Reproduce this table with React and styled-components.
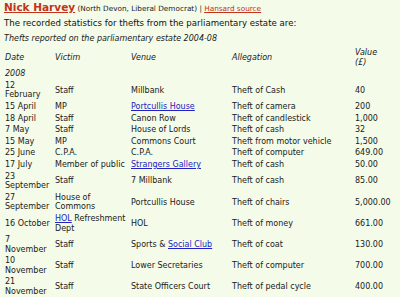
import styled, { createGlobalStyle } from "styled-components";

const getRows = () => [
  { date: "12 February", victim: "Staff", venue: "Millbank", allegation: "Theft of Cash", value: "40" },
  { date: "15 April", victim: "MP", venue: <Link>Portcullis House</Link>, allegation: "Theft of camera", value: "200" },
  { date: "18 April", victim: "Staff", venue: "Canon Row", allegation: "Theft of candlestick", value: "1,000" },
  { date: "7 May", victim: "Staff", venue: "House of Lords", allegation: "Theft of cash", value: "32" },
  { date: "15 May", victim: "MP", venue: "Commons Court", allegation: "Theft from motor vehicle", value: "1,500" },
  { date: "25 June", victim: "C.P.A.", venue: "C.P.A.", allegation: "Theft of computer", value: "649.00" },
  { date: "17 July", victim: "Member of public", venue: <Link>Strangers Gallery</Link>, allegation: "Theft of cash", value: "50.00" },
  { date: "23 September", victim: "Staff", venue: "7 Millbank", allegation: "Theft of cash", value: "85.00" },
  { date: "27 September", victim: "House of Commons", venue: "Portcullis House", allegation: "Theft of chairs", value: "5,000.00" },
  { date: "16 October", victim: <><Link>HOL</Link> Refreshment Dept</>, venue: "HOL", allegation: "Theft of money", value: "661.00" },
  { date: "7 November", victim: "Staff", venue: <>Sports &amp; <Link>Social Club</Link></>, allegation: "Theft of coat", value: "130.00" },
  { date: "10 November", victim: "Staff", venue: "Lower Secretaries", allegation: "Theft of computer", value: "700.00" },
  { date: "21 November", victim: "Staff", venue: "State Officers Court", allegation: "Theft of pedal cycle", value: "400.00" },
];

function App() {
  const rows = getRows();
  return (
    <>
      <GlobalStyle />
      <Page>
        <Byline>
          <MemberName>Nick Harvey</MemberName> (North Devon, Liberal Democrat) |{" "}
          <Source>Hansard source</Source>
        </Byline>
        <Intro>The recorded statistics for thefts from the parliamentary estate are:</Intro>
        <Table>
          <Caption>Thefts reported on the parliamentary estate 2004-08</Caption>
          <colgroup>
            <col style={{ width: 50 }} />
            <col style={{ width: 76 }} />
            <col style={{ width: 101 }} />
            <col style={{ width: 123 }} />
            <col />
          </colgroup>
          <thead>
            <tr>
              <Head>Date</Head>
              <Head>Victim</Head>
              <Head>Venue</Head>
              <Head>Allegation</Head>
              <Head>
                Value
                <br />
                (£)
              </Head>
            </tr>
          </thead>
          <tbody>
            <tr>
              <Year colSpan={5}>2008</Year>
            </tr>
            {rows.map((row) => (
              <tr key={row.date}>
                <Cell>{row.date}</Cell>
                <Cell>{row.victim}</Cell>
                <Cell>{row.venue}</Cell>
                <Cell>{row.allegation}</Cell>
                <Cell>{row.value}</Cell>
              </tr>
            ))}
          </tbody>
        </Table>
      </Page>
    </>
  );
}

export default App;

const GlobalStyle = createGlobalStyle`
  html, body {
    margin: 0;
    background: #f4fbe9;
  }
  body {
    font-family: "DejaVu Sans", Verdana, sans-serif;
    color: #1a1a1a;
  }
`;

const Page = styled.div`
  width: 400px;
  height: 297px;
  overflow: hidden;
  padding: 0 4px;
  box-sizing: border-box;
`;

const Byline = styled.div`
  font-size: 7.3px;
  line-height: 14px;
  color: #222;
`;

const MemberName = styled.a`
  font-size: 10.5px;
  font-weight: bold;
  color: #c4321c;
  text-decoration: underline;
`;

const Source = styled.a`
  color: #c4321c;
  text-decoration: underline;
`;

const Intro = styled.p`
  margin: 0;
  font-size: 8.6px;
  line-height: 14px;
  color: #111;
`;

const Link = styled.a`
  color: #2222c4;
  text-decoration: underline;
`;

const Table = styled.table`
  width: 392px;
  table-layout: fixed;
  border-collapse: collapse;
  font-size: 8px;
  line-height: 9.6px;
`;

const Caption = styled.caption`
  text-align: left;
  font-style: italic;
  padding: 4px 0 3px;
  line-height: 10px;
`;

const Head = styled.th`
  font-weight: normal;
  font-style: italic;
  text-align: left;
  vertical-align: middle;
  padding: 1px 3px 1px 1px;
`;

const Year = styled.td`
  font-style: italic;
  padding: 1px 3px 1px 1px;
`;

const Cell = styled.td`
  vertical-align: middle;
  padding: 1px 3px 1px 1px;
`;
